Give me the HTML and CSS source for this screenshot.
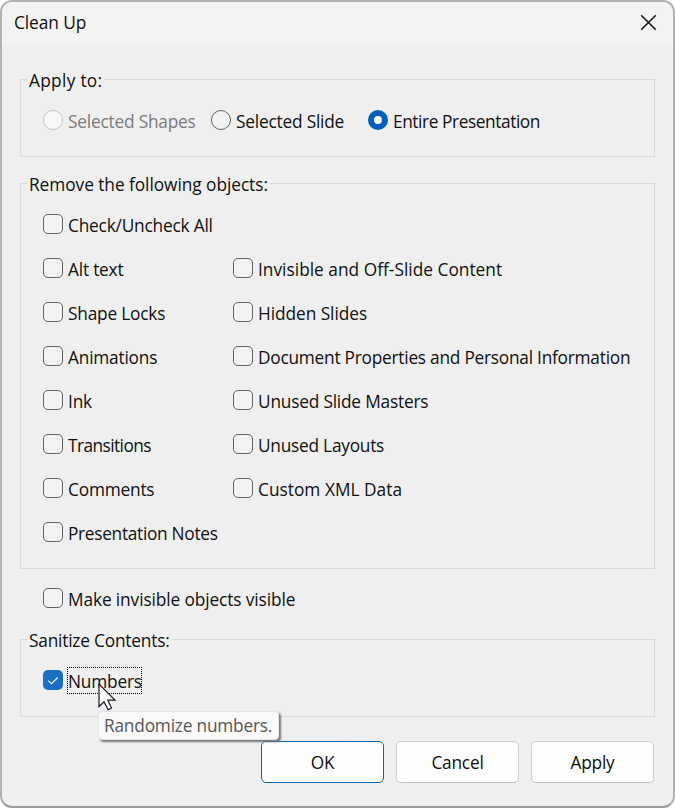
FILE: index.html
```html
<!DOCTYPE html>
<html lang="en">
<head>
<meta charset="utf-8">
<title>Clean Up</title>
<link rel="stylesheet" href="styles.css">
</head>
<body>
<main class="dialog">
  <header class="titlebar">
    <span class="title">Clean Up</span>
    <svg class="close" width="17" height="17" viewBox="0 0 17 17"><path d="M1.2 1.2 15.8 15.8M15.8 1.2 1.2 15.8"/></svg>
  </header>

  <section class="group apply">
    <h2 class="legend loosest">Apply to:</h2>
    <div class="radios">
      <label class="option disabled r1"><i class="radio"></i><span>Selected Shapes</span></label>
      <label class="option r2"><i class="radio"></i><span>Selected Slide</span></label>
      <label class="option"><i class="radio on"></i><span class="tight">Entire Presentation</span></label>
    </div>
  </section>

  <section class="group remove">
    <h2 class="legend loose">Remove the following objects:</h2>
    <div class="checks">
      <label class="option wide"><i class="box"></i><span>Check/Uncheck All</span></label>
      <label class="option"><i class="box"></i><span>Alt text</span></label>
      <label class="option"><i class="box"></i><span class="looser">Invisible and Off-Slide Content</span></label>
      <label class="option"><i class="box"></i><span>Shape Locks</span></label>
      <label class="option"><i class="box"></i><span class="loose">Hidden Slides</span></label>
      <label class="option"><i class="box"></i><span>Animations</span></label>
      <label class="option"><i class="box"></i><span class="snug">Document Properties and Personal Information</span></label>
      <label class="option"><i class="box"></i><span>Ink</span></label>
      <label class="option"><i class="box"></i><span>Unused Slide Masters</span></label>
      <label class="option"><i class="box"></i><span class="tightest">Transitions</span></label>
      <label class="option"><i class="box"></i><span class="snug">Unused Layouts</span></label>
      <label class="option"><i class="box"></i><span>Comments</span></label>
      <label class="option"><i class="box"></i><span class="looser">Custom XML Data</span></label>
      <label class="option wide"><i class="box"></i><span class="snug2">Presentation Notes</span></label>
    </div>
  </section>

  <label class="option visible"><i class="box"></i><span class="ease">Make invisible objects visible</span></label>

  <section class="group sanitize">
    <h2 class="legend">Sanitize Contents:</h2>
    <div class="numbers">
      <label class="option"><i class="box on"><svg width="20" height="20" viewBox="0 0 20 20"><path d="M5.3 10.6 8.5 13.7 14.7 7.5"/></svg></i><span>Numbers</span></label>
      <div class="focus"></div>
      <svg class="cursor" width="20" height="28" viewBox="0 0 20 28"><path d="M1 1V23.5L6 18.8 10.1 26.7 13.5 25 9.8 17.2H17Z"/></svg>
      <div class="tooltip">Randomize numbers.</div>
    </div>
  </section>

  <footer class="actions">
    <button class="primary">OK</button>
    <button>Cancel</button>
    <button>Apply</button>
  </footer>
</main>
</body>
</html>
```
FILE: styles.css
```css
* { box-sizing: border-box; }
body {
  margin: 0;
  background: #fff;
  color: #101010;
  font: 17.3px/24px "Open Sans", "Noto Sans", sans-serif;
  letter-spacing: -0.2px;
}
.tightest { letter-spacing: -0.56px; }
.tight { letter-spacing: -0.42px; }
.snug2 { letter-spacing: -0.3px; }
.snug { letter-spacing: -0.24px; }
.ease { letter-spacing: -0.11px; }
.loose { letter-spacing: -0.05px; }
.looser { letter-spacing: 0.02px; }
.loosest { letter-spacing: 0.3px; }
.dialog {
  width: 675px;
  height: 808px;
  border: 2px solid #b1b1b1;
  border-bottom-color: #9c9c9c;
  border-radius: 12px;
  background: #efefef;
  overflow: hidden;
}
.titlebar {
  display: flex;
  align-items: center;
  justify-content: space-between;
  height: 43px;
  padding: 0 16px 2px 12px;
  background: #f3f3f3;
}
.title { letter-spacing: -0.08px; }
.close path { fill: none; stroke: #111; stroke-width: 1.5; }
.group {
  width: 635px;
  margin-left: 18px;
  border: 1px solid #d9d9d9;
}
.legend {
  width: max-content;
  height: 24px;
  margin: -11px 0 0 6px;
  padding: 0 2px;
  background: #efefef;
  font: inherit;
}
.apply { height: 78px; margin-top: 34px; }
.radios { display: flex; padding: 17px 0 0 22px; }
.r1 { width: 168px; }
.r2 { width: 157px; }
.option {
  display: flex;
  align-items: flex-start;
  gap: 5px;
  height: 24px;
  white-space: nowrap;
}
.radio, .box {
  flex: none;
  width: 20px;
  height: 20px;
  border: 1px solid #626262;
  border-radius: 5px;
  background: #f3f3f3;
}
.radio { border-radius: 50%; }
.radio.on { border: 6px solid #005fb8; background: #fff; }
.disabled { color: #7b7b7b; }
.disabled .radio { border-color: #c3c3c3; background: #f8f8f8; }
.remove { height: 386px; margin-top: 26px; }
.checks {
  display: grid;
  grid-template-columns: 190px 1fr;
  row-gap: 20px;
  padding: 17px 0 0 22px;
}
.wide { grid-column: 1 / -1; }
.visible { margin: 19px 0 0 41px; }
.sanitize { height: 78px; margin-top: 27px; }
.numbers { position: relative; padding: 17px 0 0 22px; }
.box.on { border: 0; background: #1b6ec2; }
.box.on svg { display: block; }
.box.on path { fill: none; stroke: #fff; stroke-width: 1.1; }
.focus {
  position: absolute;
  left: 46px;
  top: 14px;
  width: 75px;
  height: 27px;
  border: 1px dotted #000;
}
.cursor { position: absolute; left: 77px; top: 30px; z-index: 2; }
.cursor path { fill: #fff; stroke: #171727; stroke-width: 1.2; }
.tooltip {
  position: absolute;
  left: 77px;
  top: 58px;
  z-index: 1;
  width: 181px;
  height: 29px;
  padding: 2px 0 0 5px;
  border: 1px solid #e6e6e6;
  border-radius: 4px;
  background: #f9f9f9;
  box-shadow: 2px 2px 2px #777;
  color: #575757;
  white-space: nowrap;
}
.actions { display: flex; gap: 12px; margin: 24px 0 0 259px; }
button {
  width: 123px;
  height: 42px;
  padding: 1px 0 0;
  border: 1px solid #d0d0d0;
  border-bottom-color: #bdbdbd;
  border-radius: 5px;
  background: #fdfdfd;
  color: inherit;
  font: inherit;
  letter-spacing: inherit;
}
.primary { border-color: #0067b0; }
```
